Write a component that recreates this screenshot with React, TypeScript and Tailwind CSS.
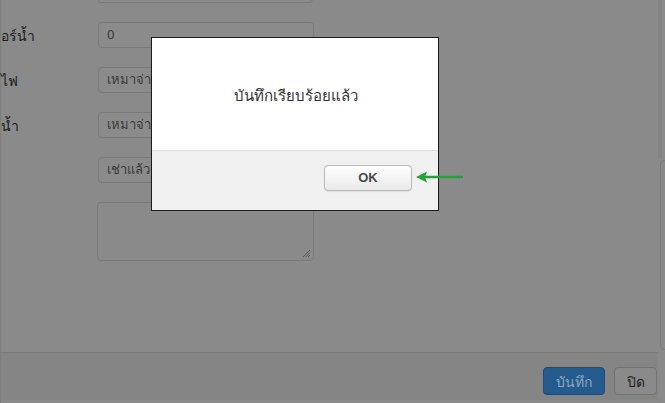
import React from 'react'

const inputCls =
  'h-[26px] w-[216px] rounded-[4px] border border-[#7b7b7b] bg-[#8b8b8b] px-2 flex items-center text-[13px] text-[#3a3a3a]'

function Row({ label, value }: { label: string; value: string }) {
  return (
    <div className="flex items-center">
      <div className="w-[97px] text-[14px] text-[#1c1c1c]">{label}</div>
      <div className={inputCls}>{value}</div>
    </div>
  )
}

function SavedDialog() {
  return (
    <div className="absolute left-[151px] top-[37px] w-[288px] h-[174px] border border-[#1b1b1b] bg-white flex flex-col">
      <div className="flex-1 flex items-center justify-center pt-[2px] pl-[2px] text-[15px] text-[#333]">
        บันทึกเรียบร้อยแล้ว
      </div>
      <div className="h-[60px] border-t border-[#e2e2e2] bg-[#f0f0f0] flex justify-end items-start pt-[14px] pr-[26px]">
        <button className="h-[26px] w-[88px] rounded-[4px] border border-[#b9b9b9] bg-gradient-to-b from-white to-[#e9e9e9] shadow-[0_1px_1px_rgba(0,0,0,0.08)] text-[13px] font-bold text-[#4a4a4a] font-['Liberation_Sans',sans-serif]">
          OK
        </button>
      </div>
    </div>
  )
}

export default function App() {
  return (
    <div className="relative w-[665px] h-[403px] overflow-hidden bg-[#8a8a8a] font-['Noto_Sans',sans-serif]">
      <div className="flex h-full">
        <div className="w-[1px] bg-[#7e7e7e]" />
        <div className="flex-1 flex flex-col">
          <div className="flex-1 flex flex-col gap-[19px] mt-[-23px]">
            <div className="flex items-center">
              <div className="w-[96px]" />
              <div className={inputCls} />
            </div>
            <Row label="อร์น้ำ" value="0" />
            <Row label="ไฟ" value="เหมาจ่าย" />
            <Row label="น้ำ" value="เหมาจ่าย" />
            <Row label="" value="เช่าแล้ว" />
            <div className="flex">
              <div className="w-[96px]" />
              <div className="relative h-[59px] w-[217px] rounded-[4px] border border-[#7b7b7b]">
                <svg className="absolute right-[2px] bottom-[2px]" width="10" height="10" viewBox="0 0 10 10">
                  <path d="M9 2 L2 9 M9 4.5 L4.5 9 M9 7 L7 9" stroke="#5a5a5a" strokeWidth="1" />
                </svg>
              </div>
            </div>
          </div>
          <div className="h-[48px] border-t border-[#7c7c7c] bg-[#858585] flex justify-end items-start gap-[9px] pt-[14px] pr-[1px]">
            <button className="h-[28px] w-[62px] rounded-[4px] border border-[#1d4d78] bg-[#245b8c] text-[14px] text-[#8ea6bd]">
              บันทึก
            </button>
            <button className="h-[28px] w-[43px] rounded-[4px] border border-[#737373] bg-[#8a8a8a] text-[14px] text-[#1e1e1e]">
              ปิด
            </button>
          </div>
          <div className="h-[3px] bg-[#8b8b8b]" />
        </div>
        <div className="w-[7px] flex flex-col">
          <div className="h-[158px] w-[4px] bg-[#838383]" />
          <div className="mt-[2px] h-[190px] ml-[2px] rounded-tl-[6px] rounded-bl-[6px] border-l border-t border-b border-[#7c7c7c]" />
        </div>
      </div>

      <SavedDialog />

      <svg className="absolute left-[414px] top-[170px]" width="52" height="14" viewBox="0 0 52 14">
        <path d="M10 7 H49" stroke="#21a33a" strokeWidth="2.5" />
        <path d="M2 7 L13 1.5 L11 7 L13 12.5 Z" fill="#21a33a" />
      </svg>
    </div>
  )
}
